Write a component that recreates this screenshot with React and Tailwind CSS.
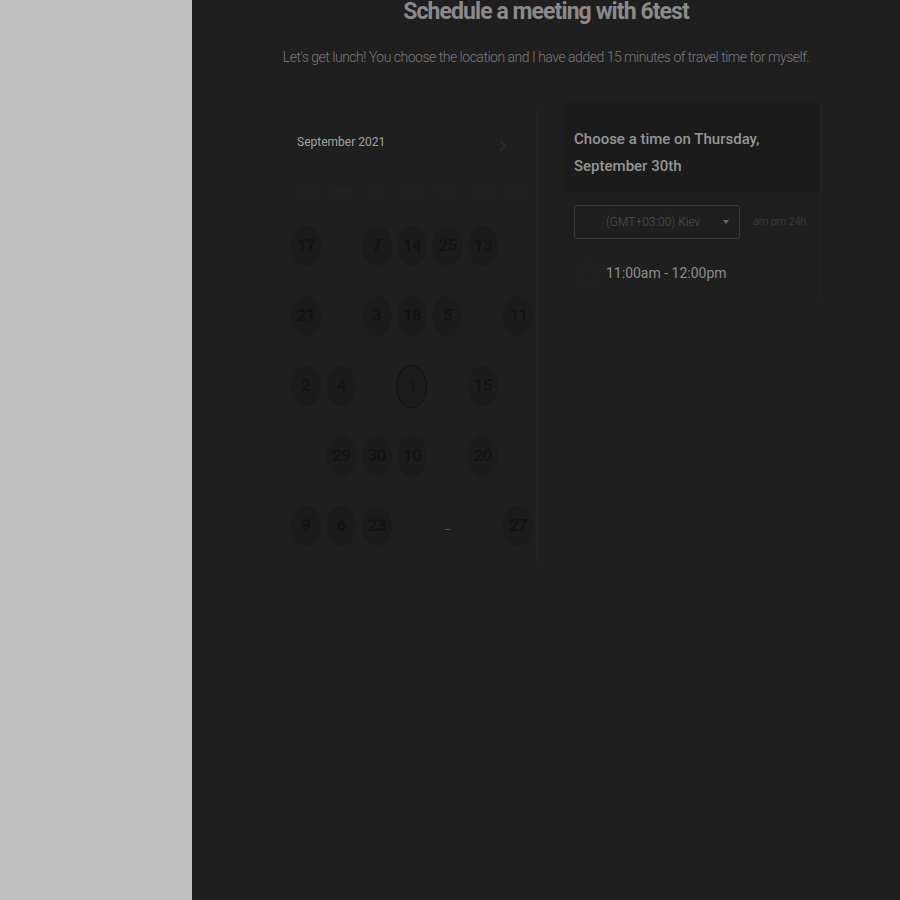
import React from 'react';

const rows = [
  [17, null, 7, 14, 25, 13, null],
  [21, null, 3, 18, 5, null, 11],
  [2, 4, null, 1, null, 15, null],
  [null, 29, 30, 10, null, 20, null],
  [9, 6, 23, null, 'dash', null, 27],
];

const DayCell = ({ value }) => {
  if (value === 'dash') {
    return (
      <div className="flex h-[70px] items-center justify-center">
        <span className="mt-[6px] block h-[1px] w-[5px] bg-[#555555]" />
      </div>
    );
  }
  if (value === null) return <div className="h-[70px]" />;
  const selected = value === 1;
  return (
    <div className="flex h-[70px] items-center justify-center">
      <div
        className={
          selected
            ? 'flex h-[43px] w-[31px] items-center justify-center rounded-[50%] border border-[#121212] bg-[#1c1c1c] text-[17px] font-bold tracking-[-0.04em] text-[#161616]'
            : 'flex h-[40px] w-[30px] items-center justify-center rounded-[50%] bg-[#1b1b1b] text-[17px] font-bold tracking-[-0.04em] text-[#121212]'
        }
      >
        {value}
      </div>
    </div>
  );
};

const App = () => {
  return (
    <div className="flex h-[900px] w-[900px] overflow-hidden font-['Roboto',sans-serif]">
      <aside className="w-[192px] shrink-0 bg-[#bfbfbf]" />
      <main className="flex flex-1 flex-col bg-[#1f1f1f]">
        <h1 className="-mt-[2px] text-center text-[23px] font-bold leading-[28px] tracking-[-0.04em] text-[#8a8a8a]">
          Schedule a meeting with 6test
        </h1>
        <p className="mt-[21px] text-center text-[14px] font-light leading-[20px] tracking-[-0.035em] text-[#7a7a7a]">
          Let's get lunch! You choose the location and I have added 15 minutes of travel time for myself.
        </p>

        <div className="mt-[41px] flex pl-[93px]">
          {/* calendar */}
          <section className="w-[252px] border-r border-[#232323] pt-[24px]">
            <div className="flex items-center justify-between pl-[12px] pr-[30px]">
              <span className="text-[12px] leading-[18px] text-[#a3a3a3]">September 2021</span>
              <svg className="mt-[8px] h-[12px] w-[8px] text-[#2e2e2e]" viewBox="0 0 8 12" fill="none" stroke="currentColor" strokeWidth={1.5}>
                <path d="M2 1l5 5-5 5" />
              </svg>
            </div>
            <div className="mt-[34px] grid grid-cols-7 pl-[3px] text-center text-[9px] leading-[12px] text-[#242424]">
              <span>SUN</span>
              <span>MON</span>
              <span>TUE</span>
              <span>WED</span>
              <span>THU</span>
              <span>FRI</span>
              <span>SAT</span>
            </div>
            <div className="mt-[13px] grid grid-cols-7 pl-[3px]">
              {rows.flat().map((v, i) => (
                <DayCell key={i} value={v} />
              ))}
            </div>
          </section>

          {/* time picker */}
          <section className="-mt-[5px] ml-[27px] h-[194px] w-[257px] border-r border-[#242424]">
            <div className="bg-[#1b1b1b] px-[10px] pb-[12px] pt-[23px] text-[15px] font-medium leading-[27px] text-[#959595]">
              Choose a time on Thursday,
              <br />
              September 30th
            </div>
            <div className="mt-[13px] flex items-center pl-[10px]">
              <div className="flex h-[34px] w-[166px] items-center justify-between rounded-[3px] border border-[#3a3a3a] pl-[31px] pr-[10px]">
                <span className="text-[12px] font-light text-[#505050]">(GMT+03:00) Kiev</span>
                <span className="h-0 w-0 border-x-[3px] border-t-[4px] border-x-transparent border-t-[#6a6a6a]" />
              </div>
              <span className="ml-[13px] text-[11px] font-light tracking-[-0.02em] text-[#454545]">am pm 24h</span>
            </div>
            <div className="mt-[24px] flex items-center pl-[14px]">
              <span className="h-[20px] w-[20px] rounded-full border border-[#252525]" />
              <span className="ml-[8px] text-[14px] leading-[20px] text-[#8c8c8c]">11:00am - 12:00pm</span>
            </div>
          </section>
        </div>
      </main>
    </div>
  );
};

export default App;
